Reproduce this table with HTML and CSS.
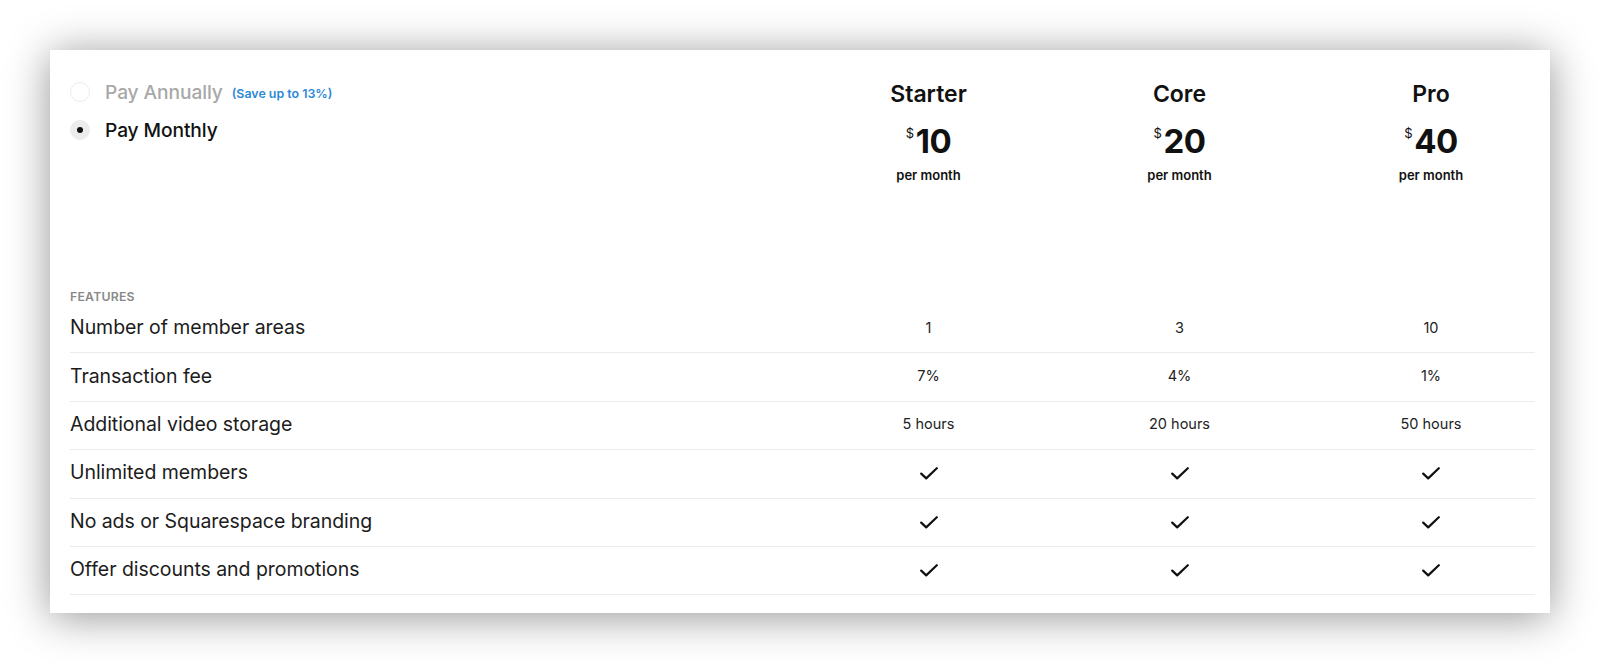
FILE: index.html
```html
<!DOCTYPE html>
<html lang="en">
<head>
<meta charset="utf-8">
<title>Pricing</title>
<link rel="stylesheet" href="styles.css">
</head>
<body>
<div class="card">
  <div class="head">
    <div class="billing">
      <div class="opt">
        <span class="radio"></span>
        <span class="opt-label muted">Pay Annually</span>
        <span class="save">(Save up to 13%)</span>
      </div>
      <div class="opt">
        <span class="radio on"><span class="dot"></span></span>
        <span class="opt-label">Pay Monthly</span>
      </div>
    </div>
    <div class="plan">
      <div class="plan-name">Starter</div>
      <div class="price"><span class="cur">$</span>10</div>
      <div class="per">per month</div>
    </div>
    <div class="plan">
      <div class="plan-name">Core</div>
      <div class="price"><span class="cur">$</span>20</div>
      <div class="per">per month</div>
    </div>
    <div class="plan last">
      <div class="plan-name">Pro</div>
      <div class="price"><span class="cur">$</span>40</div>
      <div class="per">per month</div>
    </div>
  </div>

  <div class="section">FEATURES</div>

  <div class="table">
    <div class="row">
      <div class="label">Number of member areas</div>
      <div class="val">1</div><div class="val">3</div><div class="val last">10</div>
    </div>
    <div class="row">
      <div class="label">Transaction fee</div>
      <div class="val">7%</div><div class="val">4%</div><div class="val last">1%</div>
    </div>
    <div class="row">
      <div class="label">Additional video storage</div>
      <div class="val">5 hours</div><div class="val">20 hours</div><div class="val last">50 hours</div>
    </div>
    <div class="row">
      <div class="label">Unlimited members</div>
      <div class="val ic"><svg class="check" viewBox="0 0 18 13"><path d="M1.2 6.6 L6.2 11.4 L16.8 1.2"/></svg></div>
      <div class="val ic"><svg class="check" viewBox="0 0 18 13"><path d="M1.2 6.6 L6.2 11.4 L16.8 1.2"/></svg></div>
      <div class="val ic last"><svg class="check" viewBox="0 0 18 13"><path d="M1.2 6.6 L6.2 11.4 L16.8 1.2"/></svg></div>
    </div>
    <div class="row">
      <div class="label">No ads or Squarespace branding</div>
      <div class="val ic"><svg class="check" viewBox="0 0 18 13"><path d="M1.2 6.6 L6.2 11.4 L16.8 1.2"/></svg></div>
      <div class="val ic"><svg class="check" viewBox="0 0 18 13"><path d="M1.2 6.6 L6.2 11.4 L16.8 1.2"/></svg></div>
      <div class="val ic last"><svg class="check" viewBox="0 0 18 13"><path d="M1.2 6.6 L6.2 11.4 L16.8 1.2"/></svg></div>
    </div>
    <div class="row">
      <div class="label">Offer discounts and promotions</div>
      <div class="val ic"><svg class="check" viewBox="0 0 18 13"><path d="M1.2 6.6 L6.2 11.4 L16.8 1.2"/></svg></div>
      <div class="val ic"><svg class="check" viewBox="0 0 18 13"><path d="M1.2 6.6 L6.2 11.4 L16.8 1.2"/></svg></div>
      <div class="val ic last"><svg class="check" viewBox="0 0 18 13"><path d="M1.2 6.6 L6.2 11.4 L16.8 1.2"/></svg></div>
    </div>
  </div>
</div>
</body>
</html>
```

FILE: styles.css
```css
* { box-sizing: border-box; }
html, body { margin: 0; padding: 0; background: #fff; }
body {
  font-family: "Inter", "Helvetica Neue", Arial, sans-serif;
  color: #1a1a1a;
  padding: 50px;
}
.card {
  width: 1500px;
  height: 563px;
  background: #fff;
  box-shadow: 0 4px 40px rgba(0, 0, 0, 0.42);
  padding: 31px 15px 0 20px;
}
.head {
  display: grid;
  grid-template-columns: 1fr 251px 251px 230px;
  height: 208px;
}
.billing {
  display: flex;
  flex-direction: column;
  gap: 16px;
}
.opt {
  display: flex;
  align-items: center;
  height: 22px;
}
.radio {
  width: 20px;
  height: 20px;
  border-radius: 50%;
  border: 1px solid #ececec;
  background: #fff;
  display: flex;
  align-items: center;
  justify-content: center;
  margin-right: 15px;
}
.radio.on { background: #ececec; border-color: #ececec; }
.dot { width: 6px; height: 6px; border-radius: 50%; background: #111; }
.opt-label {
  font-size: 19.2px;
  font-weight: 500;
  color: #111;
  letter-spacing: -0.1px;
}
.opt-label.muted { color: #a8a8a8; }
.save {
  font-size: 12.4px;
  font-weight: 600;
  color: #2d89d6;
  margin-left: 9px;
  padding-top: 3px;
}
.plan {
  display: flex;
  flex-direction: column;
  align-items: center;
}
.plan.last { padding-left: 22px; }
.plan-name {
  font-size: 23px;
  font-weight: 600;
  line-height: 26px;
  color: #111;
}
.price {
  margin-top: 14px;
  font-size: 33px;
  font-weight: 700;
  line-height: 40px;
  color: #111;
  letter-spacing: -0.5px;
  display: flex;
  align-items: flex-start;
}
.cur {
  font-size: 13px;
  font-weight: 400;
  line-height: 13px;
  margin-top: 6px;
  margin-right: 2px;
}
.per {
  margin-top: 6px;
  font-size: 13px;
  font-weight: 600;
  line-height: 16px;
  color: #111;
}
.section {
  font-size: 12.3px;
  font-weight: 600;
  color: #8a8a8a;
  letter-spacing: 0.2px;
  height: 16px;
  line-height: 15px;
}
.row {
  display: grid;
  grid-template-columns: 1fr 251px 251px 230px;
  align-items: center;
  height: 48.4px;
  border-bottom: 1px solid #ebebeb;
}
.label {
  font-size: 19.5px;
  font-weight: 400;
  color: #1c1c1c;
  letter-spacing: -0.05px;
  padding-bottom: 3px;
}
.val {
  text-align: center;
  font-size: 14.5px;
  color: #222;
  display: flex;
  justify-content: center;
  padding-bottom: 3px;
}
.val.ic { padding-bottom: 0; }
.val.last { padding-left: 22px; }
.check {
  width: 18px;
  height: 13px;
  fill: none;
  stroke: #111;
  stroke-width: 2.2;
  stroke-linecap: round;
  stroke-linejoin: round;
}
```
